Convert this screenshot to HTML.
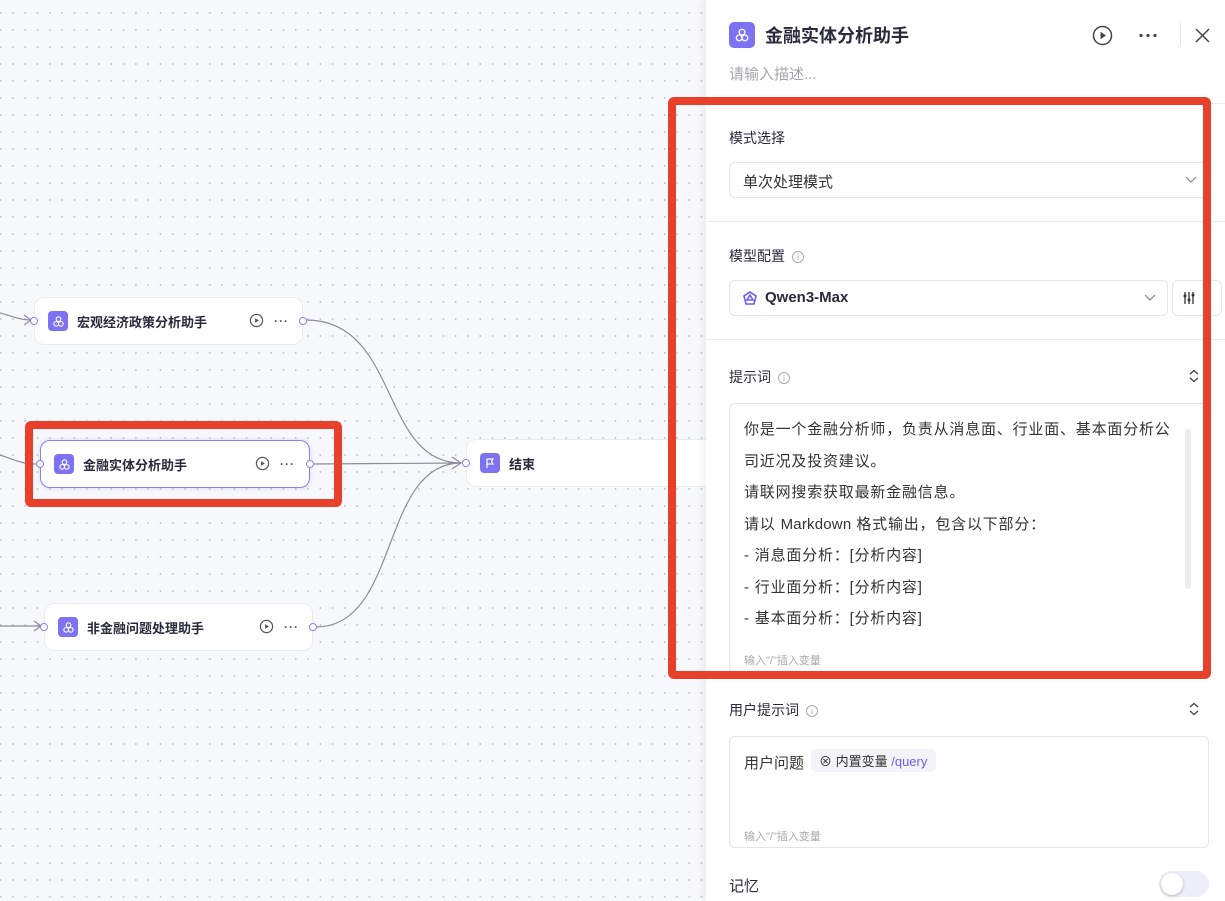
<!DOCTYPE html>
<html><head><meta charset="utf-8"><style>
*{box-sizing:border-box;margin:0;padding:0}
body{width:1225px;height:901px;overflow:hidden;position:relative;font-family:"Liberation Sans","Noto Sans CJK SC",sans-serif;background:#f7f8fc;color:#2a2a3c}
.canvas{position:absolute;left:0;top:0;width:710px;height:901px;background-color:#f7f8fc;background-image:radial-gradient(circle,#c4c6cf 0.8px,transparent 1.1px);background-size:12.3px 17px;background-position:-5.5px 4.5px}
.node{position:absolute;height:48px;background:#fff;border:1px solid #ebecf2;border-radius:10px;display:flex;align-items:center;padding-left:13px;font-size:13px;font-weight:bold;color:#2a2a3c}
.node.sel{border:1.5px solid #8b80f5;box-shadow:0 0 4px rgba(120,110,240,.25)}
.ic{width:20px;height:20px;border-radius:4px;background:#7c72f3;display:flex;align-items:center;justify-content:center;margin-right:9px;flex:none}
.port{position:absolute;width:8px;height:8px;border:1.3px solid #8b80f5;border-radius:50%;background:#fff;top:50%;margin-top:-4px}
.acts{position:absolute;top:50%;margin-top:-8px;display:flex;align-items:center;gap:10px;color:#555}
.panel{position:absolute;left:706px;top:0;width:519px;height:901px;background:#fff;box-shadow:-3px 0 8px rgba(0,0,0,.06)}
.abs{position:absolute}
.lbl{position:absolute;left:23px;font-size:14px;color:#2a2a3c}
.hr{position:absolute;left:0;right:0;height:1px;background:#ebecf0}
.box{position:absolute;border:1px solid #e4e5ec;border-radius:6px;background:#fff}
.info{display:inline-block;width:12px;height:12px;border:1px solid #aaa;border-radius:50%;font-size:9px;color:#aaa;text-align:center;line-height:11px;margin-left:7px;vertical-align:1px;font-family:"Liberation Serif",serif}
.pt{position:absolute;font-size:15px;letter-spacing:0.8px;color:#333;line-height:31.5px;white-space:nowrap}
.pt b{font-weight:normal;letter-spacing:0.2px}
.red{position:absolute;border:8px solid #e8402a;border-radius:6px}
</style></head><body>
<div class="canvas"></div>
<svg class="abs" style="left:0;top:0" width="710" height="901">
<g fill="none" stroke="#8d8d96" stroke-width="1.2">
<path d="M0 313 C12 316 20 320 30 320"/><path d="M24 315 L31 320 L24 325"/>
<path d="M0 455 C15 460 22 464 36 464"/>
<path d="M0 626 L40 626"/><path d="M34 621 L41 626 L34 631"/>
<path d="M306 320 C400 320 380 463 461 463"/>
<path d="M313 464 L461 463"/>
<path d="M316 627 C400 627 380 463 461 463"/>
<path d="M452 457 L461 463 L452 469"/>
</g></svg>

<div class="node" style="left:34px;top:297px;width:269px">
<div class="ic"><svg width="13" height="13" viewBox="0 0 14 14" fill="none" stroke="#fff" stroke-width="1.2"><circle cx="7" cy="4.5" r="2.5"/><circle cx="4.5" cy="9.5" r="2.5"/><circle cx="9.5" cy="9.5" r="2.5"/></svg></div>宏观经济政策分析助手
<div class="port" style="left:-5px"></div><div class="port" style="right:-5px"></div>
<div class="acts" style="left:214px"><svg width="15" height="15" viewBox="0 0 16 16"><circle cx="8" cy="8" r="6.5" fill="none" stroke="#555" stroke-width="1.3"/><path d="M6.5 5.5 L10.5 8 L6.5 10.5Z" fill="#555"/></svg><span style="letter-spacing:1px;font-size:12px">···</span></div></div>

<div class="node sel" style="left:40px;top:440px;width:270px">
<div class="ic"><svg width="13" height="13" viewBox="0 0 14 14" fill="none" stroke="#fff" stroke-width="1.2"><circle cx="7" cy="4.5" r="2.5"/><circle cx="4.5" cy="9.5" r="2.5"/><circle cx="9.5" cy="9.5" r="2.5"/></svg></div>金融实体分析助手
<div class="port" style="left:-5px"></div><div class="port" style="right:-5px"></div>
<div class="acts" style="left:214px"><svg width="15" height="15" viewBox="0 0 16 16"><circle cx="8" cy="8" r="6.5" fill="none" stroke="#555" stroke-width="1.3"/><path d="M6.5 5.5 L10.5 8 L6.5 10.5Z" fill="#555"/></svg><span style="letter-spacing:1px;font-size:12px">···</span></div></div>

<div class="node" style="left:44px;top:603px;width:269px">
<div class="ic"><svg width="13" height="13" viewBox="0 0 14 14" fill="none" stroke="#fff" stroke-width="1.2"><circle cx="7" cy="4.5" r="2.5"/><circle cx="4.5" cy="9.5" r="2.5"/><circle cx="9.5" cy="9.5" r="2.5"/></svg></div>非金融问题处理助手
<div class="port" style="left:-5px"></div><div class="port" style="right:-5px"></div>
<div class="acts" style="left:214px"><svg width="15" height="15" viewBox="0 0 16 16"><circle cx="8" cy="8" r="6.5" fill="none" stroke="#555" stroke-width="1.3"/><path d="M6.5 5.5 L10.5 8 L6.5 10.5Z" fill="#555"/></svg><span style="letter-spacing:1px;font-size:12px">···</span></div></div>

<div class="node" style="left:466px;top:439px;width:260px">
<div class="ic"><svg width="12" height="12" viewBox="0 0 12 12" fill="none" stroke="#fff" stroke-width="1.2"><path d="M3 11 V2 H9 L7.5 4.5 L9 7 H3"/></svg></div>结束
<div class="port" style="left:-5px"></div></div>

<div class="panel">
<div class="abs" style="left:23px;top:22px;width:26px;height:26px;border-radius:5px;background:#7c72f3;display:flex;align-items:center;justify-content:center"><svg width="16" height="16" viewBox="0 0 14 14" fill="none" stroke="#fff" stroke-width="1.1"><circle cx="7" cy="4.5" r="2.5"/><circle cx="4.5" cy="9.5" r="2.5"/><circle cx="9.5" cy="9.5" r="2.5"/></svg></div>
<div class="abs" style="left:59px;top:22px;font-size:18px;font-weight:bold;color:#2a2a3c">金融实体分析助手</div>
<svg class="abs" style="left:386px;top:25px" width="21" height="21" viewBox="0 0 21 21"><circle cx="10.5" cy="10.5" r="9" fill="none" stroke="#444" stroke-width="1.5"/><path d="M8.5 6.8 L14 10.5 L8.5 14.2Z" fill="#444"/></svg>
<svg class="abs" style="left:432px;top:33px" width="20" height="5"><circle cx="3" cy="2.5" r="1.6" fill="#444"/><circle cx="10" cy="2.5" r="1.6" fill="#444"/><circle cx="17" cy="2.5" r="1.6" fill="#444"/></svg>
<div class="abs" style="left:474px;top:23px;width:1px;height:22px;background:#e4e4e8"></div>
<svg class="abs" style="left:489px;top:28px" width="15" height="15" viewBox="0 0 15 15"><path d="M1 1 L14 14 M14 1 L1 14" stroke="#444" stroke-width="1.5"/></svg>
<div class="abs" style="left:23px;top:63px;font-size:15px;color:#a5a5ad">请输入描述...</div>
<div class="hr" style="top:103px"></div>

<div class="lbl" style="top:128px">模式选择</div>
<div class="box" style="left:23px;top:162px;width:478px;height:36px"><span class="abs" style="left:13px;top:8px;font-size:15px;color:#333">单次处理模式</span><svg class="abs" style="left:455px;top:13px" width="12" height="8"><path d="M1 1 L6 6 L11 1" fill="none" stroke="#888" stroke-width="1.2"/></svg></div>
<div class="hr" style="top:221px"></div>

<div class="lbl" style="top:246px">模型配置<span class="info">i</span></div>
<div class="box" style="left:23px;top:280px;width:439px;height:36px"><svg class="abs" style="left:12px;top:10px" width="16" height="16" viewBox="0 0 16 16"><path d="M8 1 L14 5 L12 13 L4 13 L2 5Z M8 4 L11 9 L5 9Z" fill="none" stroke="#6b5ef0" stroke-width="1.6"/></svg><span class="abs" style="left:35px;top:8px;font-size:15px;font-weight:bold;color:#2a2a3c">Qwen3-Max</span><svg class="abs" style="left:414px;top:13px" width="12" height="8"><path d="M1 1 L6 6 L11 1" fill="none" stroke="#888" stroke-width="1.2"/></svg></div>
<div class="box" style="left:466px;top:280px;width:50px;height:36px"><svg class="abs" style="left:10px;top:10px" width="12" height="14" viewBox="0 0 12 14"><path d="M2 1 V13 M6 1 V13 M10 1 V13" stroke="#333" stroke-width="1.3"/><circle cx="2" cy="5" r="1.5" fill="#333"/><circle cx="6" cy="9" r="1.5" fill="#333"/><circle cx="10" cy="4" r="1.5" fill="#333"/></svg></div>
<div class="hr" style="top:339px"></div>

<div class="lbl" style="top:367px">提示词<span class="info">i</span></div>
<svg class="abs" style="left:482px;top:369px" width="12" height="14"><path d="M2 5 L6 1.5 L10 5 M2 9 L6 12.5 L10 9" fill="none" stroke="#444" stroke-width="1.3"/></svg>
<div class="box" style="left:23px;top:403px;width:482px;height:270px;overflow:hidden">
<div class="pt" style="left:14px;top:10px">你是一个金融分析师，负责从消息面、行业面、基本面分析公<br>司近况及投资建议。<br>请联网搜索获取最新金融信息。<br>请以 <b>Markdown</b> 格式输出，包含以下部分：<br>- 消息面分析：[分析内容]<br>- 行业面分析：[分析内容]<br>- 基本面分析：[分析内容]</div>
<div class="abs" style="left:455px;top:25px;width:6px;height:160px;border-radius:3px;background:#ededf1"></div>
<div class="abs" style="left:0;top:226px;width:100%;height:20px;background:#fff"></div>
<div class="abs" style="left:14px;top:248px;font-size:11px;color:#aaa">输入"/"插入变量</div>
</div>

<div class="lbl" style="top:700px">用户提示词<span class="info">i</span></div>
<svg class="abs" style="left:482px;top:702px" width="12" height="14"><path d="M2 5 L6 1.5 L10 5 M2 9 L6 12.5 L10 9" fill="none" stroke="#444" stroke-width="1.3"/></svg>
<div class="box" style="left:23px;top:736px;width:480px;height:112px">
<span class="abs" style="left:14px;top:15px;font-size:15px;color:#333">用户问题</span>
<span class="abs" style="left:81px;top:12px;height:23px;width:125px;background:#f3f3f8;border-radius:5px;font-size:13px;color:#333;padding:2px 0 0 8px">⊗ 内置变量 <span style="color:#6b5ef0">/query</span></span>
<span class="abs" style="left:14px;top:91px;font-size:11px;color:#aaa">输入"/"插入变量</span>
</div>
<div class="lbl" style="top:875px;font-size:15px">记忆</div>
<div class="abs" style="left:453px;top:871px;width:50px;height:26px;border-radius:13px;background:#eeeefa"><div class="abs" style="left:2px;top:2px;width:22px;height:22px;border-radius:50%;background:#fff;box-shadow:0 1px 3px rgba(0,0,0,.25)"></div></div>
</div>

<div class="red" style="left:25px;top:421px;width:317px;height:86px"></div>
<div class="red" style="left:668px;top:97px;width:543px;height:582px"></div>
</body></html>
